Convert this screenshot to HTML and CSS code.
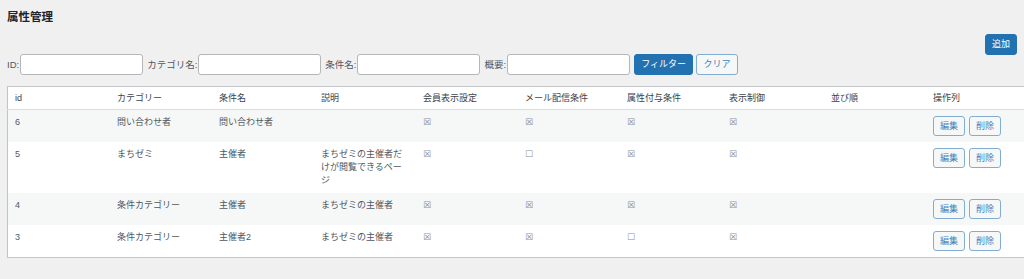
FILE: index.html
```html
<!DOCTYPE html>
<html lang="ja">
<head>
    <meta charset="UTF-8">
    <meta name="viewport" content="width=device-width, initial-scale=1.0">
    <title>属性管理</title>
    <link rel="stylesheet" href="styles.css">
</head>
<body>
    <div class="wrap">
        <h1 class="page-title">属性管理</h1>
        <div class="page-actions">
            <button class="button button-primary">追加</button>
        </div>
        <form class="filter-form">
            <label>ID:</label>
            <input type="text">
            <label>カテゴリ名:</label>
            <input type="text">
            <label>条件名:</label>
            <input type="text">
            <label>概要:</label>
            <input type="text">
            <button type="button" class="button button-primary">フィルター</button>
            <button type="button" class="button">クリア</button>
        </form>
        <table class="list-table">
            <thead>
                <tr>
                    <th>id</th>
                    <th>カテゴリー</th>
                    <th>条件名</th>
                    <th>説明</th>
                    <th>会員表示設定</th>
                    <th>メール配信条件</th>
                    <th>属性付与条件</th>
                    <th>表示制御</th>
                    <th>並び順</th>
                    <th>操作列</th>
                </tr>
            </thead>
            <tbody>
                <tr>
                    <td>6</td>
                    <td>問い合わせ者</td>
                    <td>問い合わせ者</td>
                    <td></td>
                    <td><span class="check">☒</span></td>
                    <td><span class="check">☒</span></td>
                    <td><span class="check">☒</span></td>
                    <td><span class="check">☒</span></td>
                    <td></td>
                    <td class="ops"><button class="button">編集</button><button class="button">削除</button></td>
                </tr>
                <tr>
                    <td>5</td>
                    <td>まちゼミ</td>
                    <td>主催者</td>
                    <td>まちゼミの主催者だけが閲覧できるページ</td>
                    <td><span class="check">☒</span></td>
                    <td><span class="check">☐</span></td>
                    <td><span class="check">☒</span></td>
                    <td><span class="check">☒</span></td>
                    <td></td>
                    <td class="ops"><button class="button">編集</button><button class="button">削除</button></td>
                </tr>
                <tr>
                    <td>4</td>
                    <td>条件カテゴリー</td>
                    <td>主催者</td>
                    <td>まちゼミの主催者</td>
                    <td><span class="check">☒</span></td>
                    <td><span class="check">☒</span></td>
                    <td><span class="check">☒</span></td>
                    <td><span class="check">☒</span></td>
                    <td></td>
                    <td class="ops"><button class="button">編集</button><button class="button">削除</button></td>
                </tr>
                <tr>
                    <td>3</td>
                    <td>条件カテゴリー</td>
                    <td>主催者2</td>
                    <td>まちゼミの主催者</td>
                    <td><span class="check">☒</span></td>
                    <td><span class="check">☒</span></td>
                    <td><span class="check">☐</span></td>
                    <td><span class="check">☒</span></td>
                    <td></td>
                    <td class="ops"><button class="button">編集</button><button class="button">削除</button></td>
                </tr>
            </tbody>
        </table>
    </div>
</body>
</html>
```

FILE: styles.css
```css
html, body {
    margin: 0;
    padding: 0;
    overflow: hidden;
}
body {
    background: #f0f0f1;
    color: #50575e;
    font-family: 'Liberation Sans', 'Noto Sans CJK JP', sans-serif;
    font-size: 9px;
    line-height: 13px;
}
.wrap {
    padding: 9px 0 0 7px;
}
.page-title {
    margin: 0;
    font-size: 11.5px;
    line-height: 16px;
    font-weight: 700;
    color: #1d2327;
}
.page-actions {
    display: flex;
    justify-content: flex-end;
    margin-top: 9px;
    padding-right: 7px;
}
.button {
    height: 21px;
    padding: 0 6px;
    border: 1px solid #83acd3;
    border-radius: 3px;
    background: #f6f7f7;
    color: #4384bd;
    font-family: inherit;
    font-size: 9px;
    line-height: 19px;
    cursor: pointer;
}
.button-primary {
    background: #2271b1;
    border-color: #2271b1;
    color: #fff;
}
.filter-form {
    display: flex;
    align-items: center;
    margin-top: -1px;
    margin-bottom: 11px;
}
.filter-form label {
    margin-right: 1px;
    font-size: 9.5px;
}
.filter-form input {
    box-sizing: border-box;
    width: 123px;
    height: 21px;
    margin: 0 4px 0 0;
    border: 1px solid #b4b6b9;
    border-radius: 3px;
    background: #fff;
}
.filter-form .button {
    margin-right: 3px;
}
.filter-form .button-primary {
    width: 59px;
}
.filter-form .button:last-child {
    width: 42px;
}
.list-table {
    width: 1022px;
    table-layout: fixed;
    border-collapse: collapse;
    background: #fff;
    border: 1px solid #c3c4c7;
    box-shadow: 0 1px 1px rgba(0, 0, 0, 0.04);
}
.list-table th,
.list-table td {
    width: 88px;
    padding: 6px 7px;
    text-align: left;
    vertical-align: top;
    font-weight: 400;
}
.list-table thead th {
    padding-top: 5px;
    padding-bottom: 4px;
    color: #3c434a;
    border-bottom: 1px solid #dcdcde;
}
.list-table tbody tr:nth-child(odd) {
    background: #f6f7f7;
}
.check {
    font-family: 'DejaVu Sans', sans-serif;
    font-size: 9px;
    color: #8c8f94;
}
.ops {
    white-space: nowrap;
}
.ops .button {
    width: 32px;
    height: 20px;
    line-height: 18px;
    padding: 0;
    margin-right: 4px;
}
```
